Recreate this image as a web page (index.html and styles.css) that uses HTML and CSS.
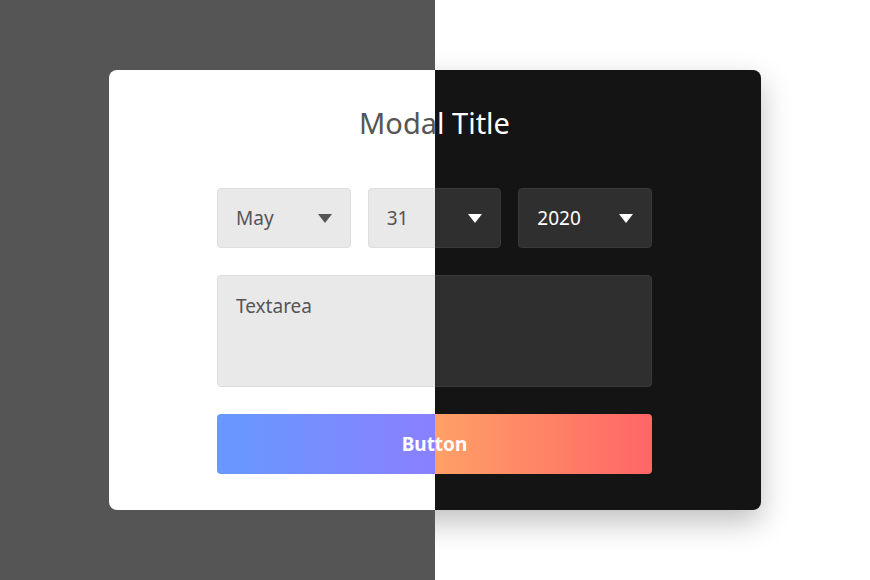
FILE: index.html
```html
<!DOCTYPE html>
<html lang="en">
<head>
  <meta charset="UTF-8" />
  <title>Modal Themes</title>
  <link rel="stylesheet" href="styles.css">
</head>
<body>
  <div class="split">
    <div class="pane">
      <div class="scene theme-light">
        <div class="modal">
          <div class="modal-title">Modal Title</div>
          <div class="date-row">
            <div class="select">May<span class="caret"></span></div>
            <div class="select">31<span class="caret"></span></div>
            <div class="select">2020<span class="caret"></span></div>
          </div>
          <div class="textarea">Textarea</div>
          <button class="action-button">Button</button>
        </div>
      </div>
    </div>
    <div class="pane">
      <div class="scene theme-dark shifted">
        <div class="modal">
          <div class="modal-title">Modal Title</div>
          <div class="date-row">
            <div class="select">May<span class="caret"></span></div>
            <div class="select">31<span class="caret"></span></div>
            <div class="select">2020<span class="caret"></span></div>
          </div>
          <div class="textarea">Textarea</div>
          <button class="action-button">Button</button>
        </div>
      </div>
    </div>
  </div>
</body>
</html>
```

FILE: styles.css
```css
body {
  margin: 0;
  font-family: 'Noto Sans', 'Open Sans', sans-serif;
}
.split {
  display: flex;
  width: 870px;
  height: 580px;
}
.pane {
  width: 435px;
  height: 580px;
  overflow: hidden;
  flex-shrink: 0;
}
.scene {
  width: 870px;
  height: 580px;
  display: flex;
  justify-content: center;
  align-items: center;
}
.scene.shifted { margin-left: -435px; }

.modal {
  width: 652px;
  height: 440px;
  box-sizing: border-box;
  border-radius: 8px;
  padding: 35px 109px 0 108px;
  display: flex;
  flex-direction: column;
}
.modal-title {
  font-size: 29px;
  line-height: 36px;
  text-align: center;
  margin-bottom: 47px;
}
.date-row {
  display: flex;
  gap: 17px;
  margin-bottom: 27px;
}
.select {
  flex: 1;
  height: 60px;
  box-sizing: border-box;
  border-radius: 4px;
  padding: 0 18px;
  display: flex;
  align-items: center;
  justify-content: space-between;
  font-size: 19px;
}
.caret {
  width: 0;
  height: 0;
  border-left: 7px solid transparent;
  border-right: 7px solid transparent;
  border-top: 9px solid currentColor;
}
.textarea {
  height: 112px;
  box-sizing: border-box;
  border-radius: 4px;
  padding: 16px 18px;
  font-size: 19px;
  line-height: 28px;
  margin-bottom: 27px;
}
.action-button {
  height: 60px;
  border: none;
  border-radius: 4px;
  color: #fff;
  font-family: inherit;
  font-size: 19px;
  font-weight: bold;
}

/* light */
.theme-light { background-color: #555; }
.theme-light .modal { background-color: #fff; color: #555; }
.theme-light .select,
.theme-light .textarea { background-color: #e9e9e9; border: 1px solid #ddd; color: #555; }
.theme-light .action-button { background: linear-gradient(to right, #6699ff, #ae67ff); }

/* dark */
.theme-dark { background-color: #fff; }
.theme-dark .modal {
  background-color: #141414; color: #fff;
  box-shadow: 0 12px 30px rgba(0,0,0,0.25);
}
.theme-dark .select,
.theme-dark .textarea { background-color: #2f2f2f; border: 1px solid #3a3a3a; color: #fff; }
.theme-dark .action-button { background: linear-gradient(to right, #ffda66, #ff6666); }
```
